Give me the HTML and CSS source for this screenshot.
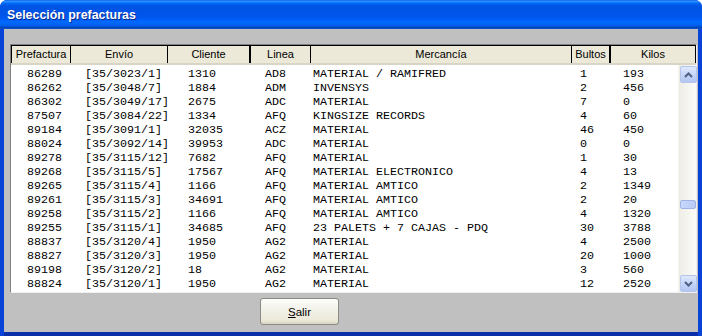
FILE: index.html
```html
<!DOCTYPE html>
<html>
<head>
<meta charset="utf-8">
<link rel="stylesheet" href="styles.css">
</head>
<body>
<div class="window">
  <div class="titlebar"><span class="title">Selección prefacturas</span></div>
  <div class="client">
    <div class="listbox">
      <div class="header">
        <div class="hcell c1">Prefactura</div>
        <div class="hcell c2">Envío</div>
        <div class="hcell c3 thick">Cliente</div>
        <div class="hcell c4">Linea</div>
        <div class="hcell c5">Mercancía</div>
        <div class="hcell c6 thick">Bultos</div>
        <div class="hcell c7">Kilos</div>
      </div>
      <div class="body">
        <div class="rows">
          <div class="row"><span>86289</span><span>[35/3023/1]</span><span>1310</span><span>AD8</span><span>MATERIAL / RAMIFRED</span><span>1</span><span>193</span></div>
          <div class="row"><span>86262</span><span>[35/3048/7]</span><span>1884</span><span>ADM</span><span>INVENSYS</span><span>2</span><span>456</span></div>
          <div class="row"><span>86302</span><span>[35/3049/17]</span><span>2675</span><span>ADC</span><span>MATERIAL</span><span>7</span><span>0</span></div>
          <div class="row"><span>87507</span><span>[35/3084/22]</span><span>1334</span><span>AFQ</span><span>KINGSIZE RECORDS</span><span>4</span><span>60</span></div>
          <div class="row"><span>89184</span><span>[35/3091/1]</span><span>32035</span><span>ACZ</span><span>MATERIAL</span><span>46</span><span>450</span></div>
          <div class="row"><span>88024</span><span>[35/3092/14]</span><span>39953</span><span>ADC</span><span>MATERIAL</span><span>0</span><span>0</span></div>
          <div class="row"><span>89278</span><span>[35/3115/12]</span><span>7682</span><span>AFQ</span><span>MATERIAL</span><span>1</span><span>30</span></div>
          <div class="row"><span>89268</span><span>[35/3115/5]</span><span>17567</span><span>AFQ</span><span>MATERIAL ELECTRONICO</span><span>4</span><span>13</span></div>
          <div class="row"><span>89265</span><span>[35/3115/4]</span><span>1166</span><span>AFQ</span><span>MATERIAL AMTICO</span><span>2</span><span>1349</span></div>
          <div class="row"><span>89261</span><span>[35/3115/3]</span><span>34691</span><span>AFQ</span><span>MATERIAL AMTICO</span><span>2</span><span>20</span></div>
          <div class="row"><span>89258</span><span>[35/3115/2]</span><span>1166</span><span>AFQ</span><span>MATERIAL AMTICO</span><span>4</span><span>1320</span></div>
          <div class="row"><span>89255</span><span>[35/3115/1]</span><span>34685</span><span>AFQ</span><span>23 PALETS + 7 CAJAS - PDQ</span><span>30</span><span>3788</span></div>
          <div class="row"><span>88837</span><span>[35/3120/4]</span><span>1950</span><span>AG2</span><span>MATERIAL</span><span>4</span><span>2500</span></div>
          <div class="row"><span>88827</span><span>[35/3120/3]</span><span>1950</span><span>AG2</span><span>MATERIAL</span><span>20</span><span>1000</span></div>
          <div class="row"><span>89198</span><span>[35/3120/2]</span><span>18</span><span>AG2</span><span>MATERIAL</span><span>3</span><span>560</span></div>
          <div class="row"><span>88824</span><span>[35/3120/1]</span><span>1950</span><span>AG2</span><span>MATERIAL</span><span>12</span><span>2520</span></div>
        </div>
        <div class="scrollbar">
          <div class="sbtn">
            <svg width="9" height="6" viewBox="0 0 9 6"><path d="M1 5 L4.5 1.5 L8 5" fill="none" stroke="#4d6185" stroke-width="2"/></svg>
          </div>
          <div class="track upper"></div>
          <div class="thumb"></div>
          <div class="track lower"></div>
          <div class="sbtn">
            <svg width="9" height="6" viewBox="0 0 9 6"><path d="M1 1 L4.5 4.5 L8 1" fill="none" stroke="#4d6185" stroke-width="2"/></svg>
          </div>
        </div>
      </div>
    </div>
    <div class="footer">
      <button class="btn"><u>S</u>alir</button>
    </div>
  </div>
</div>
</body>
</html>
```

FILE: styles.css
```css
html, body {
  margin: 0;
  padding: 0;
  background: #ffffff;
}

.window {
  width: 702px;
  height: 336px;
  display: flex;
  flex-direction: column;
  border-radius: 7px 7px 0 0;
  overflow: hidden;
  background: #0842d6;
}

.titlebar {
  height: 29px;
  flex: none;
  display: flex;
  align-items: center;
  padding-left: 7px;
  background: linear-gradient(to bottom, #0058ee 0%, #3593ff 4%, #288eff 6%, #127dff 8%, #036ffc 10%, #0262ee 14%, #0057e5 20%, #0054e3 24%, #0055eb 56%, #005bf5 66%, #026afe 76%, #0062ef 86%, #0052d6 92%, #0040ab 96%, #1b5bd9 100%);
}

.title {
  font-family: "Liberation Sans", Arial, sans-serif;
  font-weight: bold;
  font-size: 12.4px;
  color: #ffffff;
  text-shadow: 1px 1px 0 #0a2a8c;
  padding-top: 1px;
}

.client {
  flex: 1;
  margin: 0 4px 4px 4px;
  background: #c0c0c0;
  display: flex;
  flex-direction: column;
  padding: 15px 0 0 6px;
  box-shadow: 0 4px 0 0 #0a2fa8;
}

.listbox {
  width: 685px;
  height: 247px;
  border-top: 1px solid #808080;
  border-left: 1px solid #808080;
  border-right: 1px solid #f0f0f0;
  border-bottom: 1px solid #f0f0f0;
  background: #ffffff;
  display: flex;
  flex-direction: column;
}

.header {
  height: 20px;
  flex: none;
  display: flex;
  background: #ece9d8;
  border-top: 1px solid #000000;
  box-sizing: border-box;
  border-bottom: 2px solid #d8d5c6;
}

.hcell {
  box-sizing: border-box;
  border-left: 1px solid #000000;
  font-family: "Liberation Sans", Arial, sans-serif;
  font-size: 11px;
  color: #000000;
  text-align: center;
  line-height: 17px;
  white-space: nowrap;
}

.hcell.thick {
  border-right: 1px solid #000000;
}

.c1 { width: 59px; }
.c2 { width: 97px; }
.c3 { width: 83px; }
.c4 { width: 60px; }
.c5 { width: 261px; }
.c6 { width: 39px; }
.c7 { width: 86px; border-right: 1px solid #000000; }

.body {
  flex: 1;
  display: flex;
}

.rows {
  width: 667px;
  padding-top: 2px;
}

.row {
  display: grid;
  grid-template-columns: 58px 103px 77px 48px 267px 43px 1fr;
  padding-left: 16px;
  height: 14px;
  font-family: "Liberation Mono", "Courier New", monospace;
  font-size: 11.67px;
  line-height: 14px;
  color: #000000;
  white-space: pre;
}

.scrollbar {
  width: 17px;
  display: flex;
  flex-direction: column;
  padding-top: 1px;
  background: linear-gradient(to right, #eeede5, #fbfbf9);
  border-left: 1px solid #f4f3ee;
}

.sbtn {
  width: 15px;
  height: 15px;
  flex: none;
  margin-left: 1px;
  border: 1px solid #b3c5ed;
  border-radius: 2px;
  background: linear-gradient(to bottom, #dfe8fd, #c2d2f8 60%, #b4c6f2);
  display: flex;
  align-items: center;
  justify-content: center;
}

.track.upper { height: 117px; }
.track.lower { flex: 1; }

.thumb {
  width: 14px;
  height: 7px;
  margin-left: 1px;
  border: 1px solid #9fb4e6;
  border-radius: 2px;
  background: linear-gradient(to right, #c9d8fc, #b8caf5);
}

.footer {
  flex: 1;
  padding: 5px 0 0 250px;
}

.btn {
  width: 79px;
  height: 27px;
  padding: 0;
  border: 1px solid #8b8b85;
  border-radius: 3px;
  background: linear-gradient(to bottom, #fdfdfb 0%, #f3f2ea 40%, #ece9d8 85%, #d8d3c2 100%);
  font-family: "Liberation Sans", Arial, sans-serif;
  font-size: 11.5px;
  color: #000000;
}
```
